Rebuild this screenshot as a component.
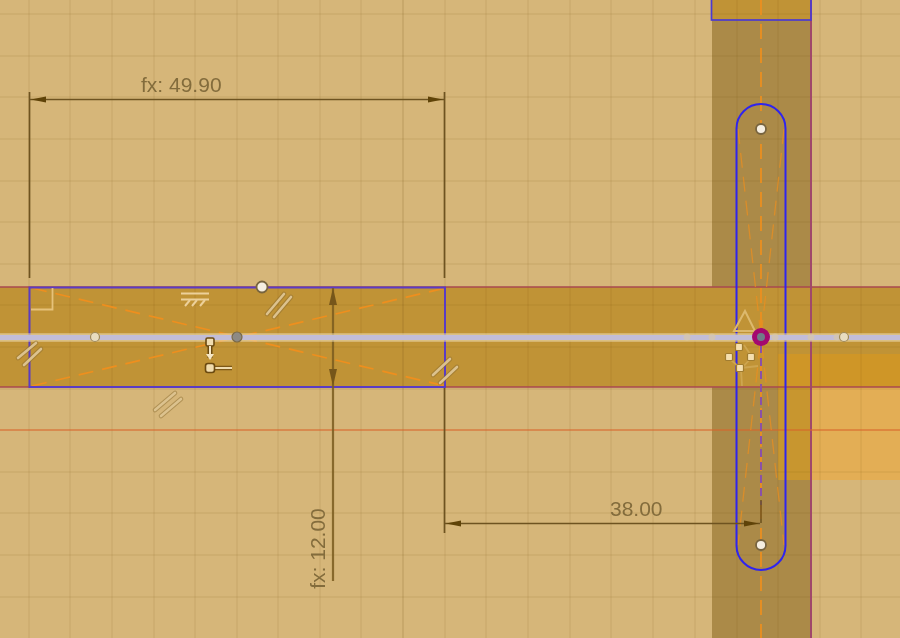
const vLines = [29, 70, 112, 154, 195, 237, 278, 320, 361, 403, 445, 486, 528, 570, 611, 653, 695, 737, 778, 820, 861];
const hLines = [14, 56, 97, 139, 181, 222, 264, 305, 347, 389, 430, 472, 513, 555, 597];

// pairs of strokes for the "equal" constraint marks
const equalMarks = [
  [267, 314, 284, 294, 274, 317, 291, 297],
  [18, 358, 36, 343, 24, 365, 41, 349],
  [155, 410, 175, 393, 161, 416, 181, 399],
  [433, 375, 450, 359, 440, 383, 457, 367],
];

function Arrow({ points }) {
  return <polygon points={points} fill="#5f4308" />;
}

function Point({ x, y, r = 5 }) {
  return <circle cx={x} cy={y} r={r} fill="#f5eee0" stroke="#77643f" strokeWidth="1.8" />;
}

function Sketch() {
  return (
    <svg viewBox="0 0 900 638" className="absolute inset-0 h-full w-full">
      {/* bodies */}
      <rect x="712" y="0" width="99" height="638" fill="#ab8a48" />
      <rect x="0" y="287" width="900" height="100" fill="#c09336" />
      <rect x="712" y="0" width="99" height="20" fill="#c09336" />
      <rect x="778" y="354" width="122" height="33" fill="#cf9627" />
      <rect x="778" y="387" width="33" height="93" fill="#c8962f" />
      <rect x="811" y="387" width="89" height="93" fill="#e3ae55" />

      {/* grid */}
      {vLines.map((x) => (
        <line key={x} x1={x} y1="0" x2={x} y2="638" stroke="#6b4a10" strokeOpacity={x === 403 ? 0.18 : 0.09} strokeWidth="1.4" />
      ))}
      {hLines.map((y) => (
        <line key={y} x1="0" y1={y} x2="900" y2={y} stroke="#6b4a10" strokeOpacity="0.09" strokeWidth="1.4" />
      ))}

      {/* body edges */}
      <line x1="0" y1="287" x2="900" y2="287" stroke="#a8484f" strokeWidth="1.6" />
      <line x1="0" y1="387" x2="900" y2="387" stroke="#a8484f" strokeWidth="1.6" />
      <line x1="811" y1="0" x2="811" y2="638" stroke="#a0486a" strokeWidth="2" />
      <line x1="0" y1="430" x2="900" y2="430" stroke="#e0662f" strokeWidth="1.2" />

      {/* construction lines */}
      <g stroke="#ee8f1e" strokeWidth="1.7" strokeDasharray="15 9" fill="none">
        <line x1="32" y1="288" x2="445" y2="386" />
        <line x1="32" y1="386" x2="445" y2="288" />
        <line x1="761" y1="0" x2="761" y2="638" />
      </g>
      <g stroke="#ee8f1e" strokeOpacity="0.7" strokeWidth="1.3" strokeDasharray="15 9" fill="none">
        <line x1="738" y1="129" x2="784" y2="545" />
        <line x1="784" y1="129" x2="738" y2="545" />
      </g>
      <line x1="761" y1="345" x2="761" y2="505" stroke="#8a50a8" strokeWidth="2" strokeDasharray="8 5" />
      <line x1="761" y1="500" x2="761" y2="523" stroke="#6e5320" strokeWidth="1.6" />

      {/* sketch profile */}
      <rect x="29.5" y="287.5" width="415.5" height="99.5" fill="none" stroke="#5a3cc4" strokeWidth="2" />
      <rect x="711.5" y="-5" width="99.5" height="25" fill="none" stroke="#4b3ad0" strokeWidth="1.7" />
      <rect x="736.5" y="104" width="49" height="466" rx="24.5" fill="none" stroke="#2f24ee" strokeWidth="2" />

      {/* dimensions */}
      <g stroke="#6e5320" strokeWidth="1.7" fill="none">
        <line x1="29.5" y1="92" x2="29.5" y2="278" />
        <line x1="444.5" y1="92" x2="444.5" y2="278" />
        <line x1="30" y1="99.5" x2="444" y2="99.5" />
        <line x1="444.5" y1="388" x2="444.5" y2="533" />
        <line x1="445" y1="523.5" x2="760" y2="523.5" />
      </g>
      <line x1="333" y1="288" x2="333" y2="581" stroke="#7a5c1f" strokeOpacity="0.85" strokeWidth="2.2" />
      <Arrow points="31,99.5 46,96.5 46,102.5" />
      <Arrow points="443,99.5 428,96.5 428,102.5" />
      <Arrow points="446,523.5 461,520.5 461,526.5" />
      <Arrow points="759,523.5 744,520.5 744,526.5" />
      <polygon points="333,288 329,305 337,305" fill="#76561a" />
      <polygon points="333,386 329,369 337,369" fill="#76561a" />

      {/* axis */}
      <line x1="0" y1="337.5" x2="900" y2="337.5" stroke="#ead8ac" strokeOpacity="0.65" strokeWidth="8.5" />
      <line x1="0" y1="337.5" x2="900" y2="337.5" stroke="#c2bdd8" strokeWidth="5" />

      {/* constraint glyphs */}
      <polyline points="31,309.5 52.5,309.5 52.5,288" fill="none" stroke="#e6c27a" strokeWidth="1.8" />
      <g stroke="#ecd09a" strokeWidth="2" fill="none">
        <line x1="181" y1="293.5" x2="209" y2="293.5" />
        <line x1="181" y1="299.5" x2="209" y2="299.5" />
        <path d="M190 300l-5 6M197 300l-5 6M205 300l-5 6" />
      </g>
      <g strokeLinecap="round">
        {equalMarks.map((m, i) => (
          <g key={i}>
            <line x1={m[0]} y1={m[1]} x2={m[2]} y2={m[3]} stroke="#8a6c30" strokeOpacity="0.5" strokeWidth="4.6" />
            <line x1={m[4]} y1={m[5]} x2={m[6]} y2={m[7]} stroke="#8a6c30" strokeOpacity="0.5" strokeWidth="4.6" />
            <line x1={m[0]} y1={m[1]} x2={m[2]} y2={m[3]} stroke="#dcc28e" strokeWidth="2.6" />
            <line x1={m[4]} y1={m[5]} x2={m[6]} y2={m[7]} stroke="#dcc28e" strokeWidth="2.6" />
          </g>
        ))}
      </g>

      {/* fixed/ground marker */}
      <g>
        <line x1="210" y1="345" x2="210" y2="358" stroke="#6b4a10" strokeWidth="5" />
        <line x1="210" y1="368" x2="232" y2="368" stroke="#6b4a10" strokeOpacity="0.8" strokeWidth="4.5" />
        <rect x="206" y="338" width="8" height="8" rx="1.5" fill="#f0dcae" stroke="#6b4a10" strokeWidth="1.6" />
        <line x1="210" y1="346" x2="210" y2="356" stroke="#f5e6c4" strokeWidth="2" />
        <polygon points="206,354 214,354 210,360" fill="#f5e6c4" />
        <line x1="210" y1="368" x2="232" y2="368" stroke="#f0dcae" strokeWidth="2" />
        <rect x="205.5" y="363.5" width="9" height="9" rx="2.5" fill="#f0dcae" stroke="#6b4a10" strokeWidth="1.6" />
      </g>

      {/* coincident glyphs near the slot */}
      <polygon points="745,311 755,331 734,331" fill="none" stroke="#dcb96e" strokeWidth="2" />
      <polyline points="744,345 752,357 741,369 729,358" fill="none" stroke="#cda550" strokeWidth="1.8" />
      <polyline points="741,369 742,386" fill="none" stroke="#cda550" strokeWidth="1.8" />
      <line x1="741" y1="368" x2="758" y2="366" stroke="#cda550" strokeWidth="1.8" />
      {[[739, 347], [729, 357], [751, 357], [740, 368]].map(([x, y]) => (
        <rect key={x + "-" + y} x={x - 3.5} y={y - 3.5} width="7" height="7" rx="1" fill="#f5dfae" stroke="#a07c30" strokeWidth="1.2" />
      ))}

      {/* points */}
      {[[687, 337], [712, 337], [775, 337], [811, 337], [837, 337]].map(([x, y]) => (
        <circle key={x} cx={x} cy={y} r="3.5" fill="#d8c8a8" fillOpacity="0.65" />
      ))}
      <circle cx="844" cy="337" r="4.5" fill="#e8dcc0" stroke="#a08a58" strokeWidth="1.2" />
      <circle cx="95" cy="337" r="4.5" fill="#e8dcc0" stroke="#a08a58" strokeWidth="1.2" />
      <Point x={262} y={287} r={5.5} />
      <Point x={761} y={129} />
      <Point x={761} y={545} />
      <circle cx="237" cy="337" r="5" fill="#8d8a85" stroke="#7a6a48" strokeWidth="1.2" />
      <circle cx="761" cy="337" r="9" fill="#a4086f" />
      <circle cx="761" cy="337" r="4" fill="#6f7c88" />
    </svg>
  );
}

export default function App() {
  return (
    <div className="relative h-[638px] w-[900px] overflow-hidden bg-[#d6b679] font-['Liberation_Sans',Arial,sans-serif] text-[21px] leading-none text-[#836c3c] blur-[0.45px]">
      <Sketch />
      <span className="absolute left-[141px] top-[74px] whitespace-nowrap">fx: 49.90</span>
      <span className="absolute left-[610px] top-[498px] whitespace-nowrap">38.00</span>
      <span className="absolute left-[277px] top-[538px] -rotate-90 whitespace-nowrap">fx: 12.00</span>
    </div>
  );
}
